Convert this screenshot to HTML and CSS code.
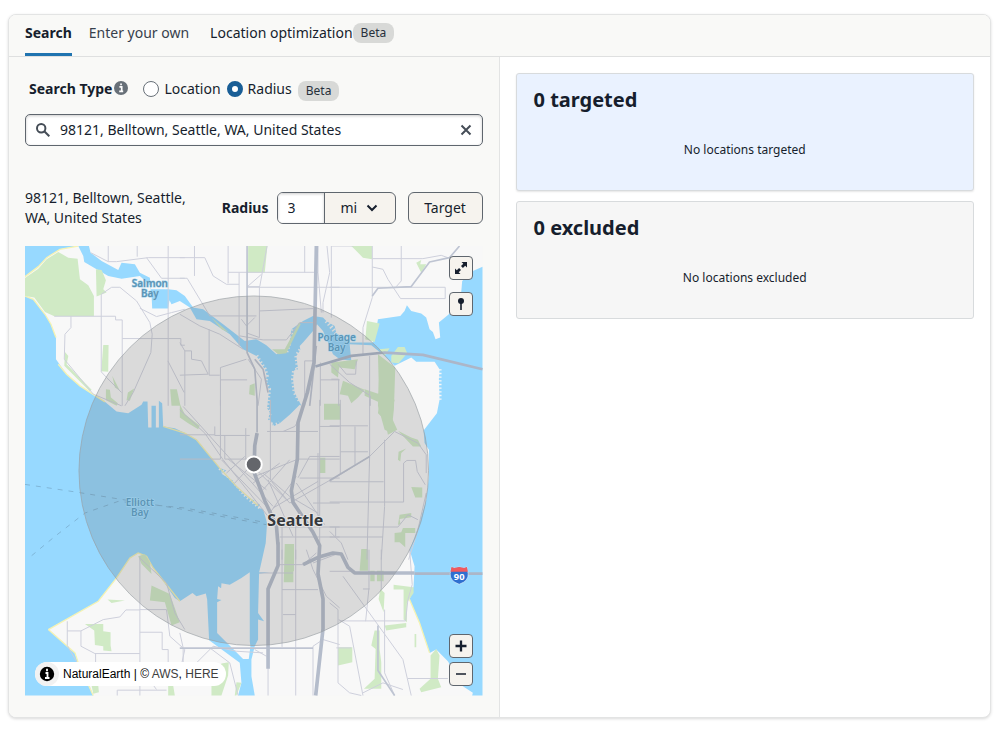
FILE: index.html
```html
<!DOCTYPE html>
<html lang="en">
<head>
<meta charset="utf-8">
<meta name="viewport" content="width=device-width, initial-scale=1">
<title>Location targeting</title>
<link rel="stylesheet" href="styles.css">
</head>
<body>
<main class="card">
  <nav class="tabs" aria-label="Targeting method">
    <button class="tab tab-active" type="button">Search</button>
    <button class="tab" type="button">Enter your own</button>
    <button class="tab tab-dark" type="button">Location optimization <span class="badge">Beta</span></button>
  </nav>
  <div class="columns">
    <section class="finder">
      <div class="types" role="radiogroup" aria-labelledby="type-title">
        <strong id="type-title">Search Type</strong>
        <svg class="info" viewBox="0 0 14 14" aria-hidden="true"><circle cx="7" cy="7" r="7" fill="#687078"/><path d="M5.4 5.8h2.3v4M5.2 10.3h4M6.2 3.3h1.7" stroke="#fff" stroke-width="1.7" fill="none"/></svg>
        <label class="choice"><input type="radio" name="type"> Location</label>
        <label class="choice"><input type="radio" name="type" checked> Radius</label>
        <span class="badge badge-low">Beta</span>
      </div>
      <div class="searchbox">
        <svg class="lens" viewBox="0 0 14 14" aria-hidden="true"><circle cx="5.2" cy="5.2" r="4.2"/><path d="M8.3 8.3l5 5"/></svg>
        <input type="text" aria-label="Search locations" value="98121, Belltown, Seattle, WA, United States">
        <button class="clear" type="button" aria-label="Clear"><svg viewBox="0 0 12 12"><path d="M1.5 1.5l9 9M10.5 1.5l-9 9"/></svg></button>
      </div>
      <div class="radius-row">
        <p class="place">98121, Belltown, Seattle, WA, United States</p>
        <label class="radius-label" for="radius">Radius</label>
        <div class="combo">
          <input id="radius" type="text" value="3">
          <div class="unit">
            <select aria-label="Unit"><option>mi</option><option>km</option></select>
            <svg viewBox="0 0 12 8" aria-hidden="true"><path d="M1.5 1.5L6 6l4.500-4.500"/></svg>
          </div>
        </div>
        <button class="target" type="button">Target</button>
      </div>
      <div class="map">
        <svg class="map-art" viewBox="0 0 1374 1350" preserveAspectRatio="xMidYMid slice" role="img" aria-label="Map of Seattle">
          <rect class="land" width="1374" height="1350"/>
          <g class="water">
            <path d="M0 0H192L197 20 230 45 280 72 290 50 330 55 345 80 375 95 378 130 430 130 455 133 480 150 505 185 535 190 595 235 660 285 695 280 725 298 755 325 785 318 795 290 800 250 835 225 865 210 895 215 905 225 930 240 935 262 975 290 1045 290 1055 250 1060 220 1127 210 1140 195 1147 178 1160 195 1190 203 1205 215 1215 250 1225 258 1233 280 1247 275 1243 230 1273 205 1310 140 1313 105 1345 75 1374 62V1350H1343L1345 1342 1315 1322 1270 1247 1235 1212 1215 1222 1185 1132 1155 1062 1167 1022 1170 962 1155 912 1160 902 1185 832 1205 762 1213 692 1213 612 1200 592 1197 554 1237 502 1245 462 1243 400 1245 370 1230 348 1175 348 1160 335 1110 360 1080 330 1040 298 975 295 980 345 945 340 925 325 910 290 895 255 877 235 865 255 835 290 825 300 827 312 815 330 820 370 808 374 805 400 810 440 830 480 825 477 795 507 765 532 745 542 740 528 730 522 735 500 727 487 733 430 722 410 726 390 720 370 695 330 655 310 615 265 555 225 515 220 495 185 465 165 440 175 434 163 430 188 382 188 380 145 375 118 345 90 290 98 250 90 215 70 178 48 175 30 160 0 105 10 65 35 40 62 0 92Z"/>
            <path d="M0 150L25 160 60 205 78 235 93 275V340L125 385 165 420 210 450 240 468 275 497 310 502 350 477 355 467H368L370 545H380V480H393V545H402V465L412 472 415 542 450 547 480 562 515 582 585 667 605 674 590 684 625 705 635 722 665 752 690 765 685 774 705 775 700 787 715 790 727 832 723 892 705 972 703 980H735L703 984 700 1102 718 1127 700 1122V1182L690 1202 680 1242V1292L690 1350H640L650 1312 645 1252 553 1184 547 1062 543 1044 515 1052 503 1042 465 1067 450 1057 405 992 385 967 365 932 340 922 315 937 275 997 220 1067 70 1152 150 1222 160 1252 190 1312 205 1350H0Z"/>
          </g>
          <path class="land" d="M675 980L650 997 615 1017 590 1013 589 1028 580 1022 577 1060 590 1063 577 1070V1162L655 1240H672L677 1202 675 1187Z"/>
          <path class="docks" d="M695 330L720 370 726 390 722 410 733 430 727 487 735 500 730 522 745 542 765 532M800 250L795 290 785 318M827 312L815 330 820 370 808 374 805 400 810 440 828 470M585 667L625 705 665 752 705 785M368 55L430 130M905 225L935 262M1245 370V462"/>
          <g class="beach"><path d="M0 92L40 62 65 35 105 10 160 0M0 150L25 160 60 205 78 235 93 275M100 355L125 385 165 420 240 468M415 542L480 562 515 582 585 667 635 722 700 780M70 1152L220 1067 275 997 315 937 340 922 365 932 385 967 465 1067M70 1152L150 1222 160 1252 205 1350M1155 1062L1185 1132 1215 1222"/></g>
          <g class="park">
            <path d="M0 96L40 68 65 40 100 18 130 35 158 38 165 100 190 118 207 150V211H88L60 198 28 155 0 150ZM213 70L230 72 243 103 235 130 245 140 215 152ZM235 297H251L250 378 229 376ZM120 318L130 330 125 355 200 432 195 437 118 360ZM243 430L255 432 258 455 279 472 275 480 243 463ZM309 440L328 428 315 465 305 463ZM436 430L456 430 467 480H440ZM262 390L285 435 270 425Z"/>
            <path d="M670 0H728L720 80H670ZM780 310L823 230 828 235 785 322 760 325 742 310ZM675 418L690 412V450L673 445ZM920 350L945 350 940 395 920 380ZM560 215L612 260 590 250Z"/>
            <path d="M980 0H1042V40L1015 35 990 10ZM1175 50L1190 42 1187 55 1205 55 1190 80ZM1027 225L1065 233 1050 288 1022 280ZM1100 330L1120 303 1140 303 1148 322 1122 352 1100 350ZM1063 310L1095 307 1080 330ZM1060 325L1112 365 1108 490 1100 562 1080 552 1060 480 1062 400ZM925 350L1000 340 990 370 945 365ZM955 405L1020 432 1000 455 980 472 970 450 945 445ZM1020 430L1065 445V470L1020 450Z"/>
            <path d="M898 474H948V522H898ZM886 636H902V682H886ZM780 895H808V975L780 1010ZM780 900H806V1010H777ZM465 475L480 505 525 540 520 550 490 532 465 515ZM1065 462H1110L1100 512 1118 552 1090 567 1080 522 1060 502ZM1120 555L1160 575 1180 582 1190 602 1165 602ZM1122 618L1145 608 1130 622 1127 647 1120 642ZM1160 724L1193 725V755H1172ZM1125 807L1160 802V815L1125 820 1128 835 1120 838ZM1110 862L1130 860 1135 847H1172V862H1142V905L1125 890H1110ZM1010 910H1028V962H1010Z"/>
            <path d="M340 932L360 925 375 950 380 985 350 955ZM380 1020L435 1045 465 1130 440 1140 420 1070 375 1065ZM180 1135H235V1157L257 1160V1200L260 1217 235 1215V1202L210 1198 208 1155ZM248 1062L300 1065 260 1072ZM200 1320L220 1320 222 1340 205 1345ZM430 1320H445L450 1350H430ZM490 1320L560 1305 590 1254 612 1250 610 1290 590 1350H560V1312ZM635 1310L650 1312 635 1350H630Z"/>
            <path d="M1010 912H1030V975H1005ZM1037 975H1050V1007H1037ZM1057 975H1077V1007H1057ZM1107 1017L1167 1025V1042L1147 1072V1130L1137 1122V1032L1107 1032ZM1067 1030L1080 1042 1077 1100 1062 1060ZM940 1205H983V1250L940 1260ZM1050 1155H1065V1210L1070 1250 1070 1330 1018 1330 1050 1300 1053 1210 1040 1200ZM1080 1140L1145 1132V1145L1085 1155ZM1218 1230L1235 1210 1245 1230 1240 1300 1250 1325 1190 1340 1185 1330 1218 1300ZM1170 1165H1175V1205H1170Z"/>
          </g>
          <g class="roads">
            <path d="M197 20L250 47H275L370 35H480M250 0V47M337 0V32M365 35L410 97H480M430 0V480M88 211H272V222H292V480M138 211V245L120 265 118 340 205 445 290 480M292 278H468V298H480M229 378V145L260 124H285L335 165 375 230 382 265 378 320 325 440 300 480M345 187L395 212 440 200 480 190M429 345L478 440M229 378L245 395 290 440"/>
            <g transform="translate(465)"><path d="M0 35H75L100 90 140 115H178M44 0V90M145 0V112M145 79H415M262 0L240 122 203 122M203 122L245 85M178 80V300M239 122V275L203 262M203 124H480M0 97H22L90 210H230M88 250V388H120M15 315V480M122 480V365L200 340M415 0V80L425 200M442 0L450 80 430 170V200M240 195L400 188M180 270L250 282H320L360 230H400M0 205L60 240 120 265 190 310M185 220L200 240 225 215M0 290L15 315H35V340L65 345 85 385 0 388M122 402H202M375 0V80M205 340L245 400 235 480M375 480V345H400M422 350V480M422 402H480"/></g>
            <g transform="translate(915)"><path d="M0 124H347V158H213L175 100 160 70 128 63M128 0V155L100 245V330M128 38H280L335 28 355 35M215 0V105L200 122M72 0H5V215M0 355L60 410 122 450 122 480M120 330V480M5 400H27V480M25 355L50 385H78L80 345"/></g>
            <g transform="translate(465 462)"><path d="M122 0V178H0M0 105H105M105 107H210M105 80V107M135 107V178H220M198 85V178M272 0V240M310 95L345 80 358 60M420 0V480M420 80H480M262 95H415M0 30L75 100 130 180 265 350M10 20L100 120 280 320M125 180L270 330M145 178L260 270M140 220L195 170M165 250L230 180M220 250L300 190M250 270L330 180M250 220L330 290 415 340M275 245L330 310 480 225M280 325L415 245M270 340L350 230M265 240L340 410M225 230L350 180M230 210L320 300M350 178H480M355 234L390 170H480M415 160V370M360 235H480M350 250L435 375M300 412H480M300 382H480M307 380V480M348 360V480M400 310H480"/></g>
            <g transform="translate(915 462)"><path d="M0 78H115M32 0V225M76 80V195M32 156H115M120 0V170L112 480M0 245L120 170 195 95 265 130 290 165V220M165 120V320L155 480M0 246H162M0 307H222V190L232 182H258L263 215 287 255M0 382H205L235 345 265 360M0 412H160M0 395L35 430 55 480M237 480L265 390 290 280M18 382V410"/></g>
            <g transform="translate(-15 912)"><path d="M360 20V438M360 180H440L450 260 495 300M360 248H427V300H445V390M142 215V288L175 345M142 244H183V290L225 312H360M183 244L250 210 300 202 318 181H360M227 312V350M292 438V422H440M395 400L410 420M360 25L440 100 465 190 495 240M495 300L475 390"/></g>
            <g transform="translate(465 912)"><path d="M0 250L10 295V340M0 295H90L150 340 175 438M90 295H400M307 0V292M348 0V438M307 120H415M310 195H348M240 70H340M225 300L260 320M265 350V438M400 290V438M400 290L430 270 480 285M300 45H370L410 10M380 0L400 60 440 140 480 175M400 40L480 10M70 345V400M45 345L100 290 170 305 250 310"/></g>
            <g transform="translate(915 912)"><path d="M0 160L25 180V400L60 430 95 438M27 210L60 230 100 438M30 214H228L235 150 248 105 240 0M40 80L220 330 245 438M155 0V120M118 0V115L108 215M165 180V370L195 438M0 65H75M20 295H65M235 387H355M100 118H120M220 420L160 400 100 430"/></g>
          </g>
          <g class="main-roads">
            <path class="bridge" d="M1170 984H1374M872 362L980 330 1080 320 1195 327 1374 370"/>
            <path class="mid" d="M667 0V320L690 370 697 462V560M915 704L1035 632M1043 150L1060 127 1160 122 1215 48 1275 35 1305 0M1060 1140V1275L1110 1350M690 340L715 370 730 440M855 480L875 300M465 1208H865"/>
            <path class="wide" d="M875 0L868 350 848 440 820 530 818 640 800 735 805 770 865 860 885 900 880 985 895 1060 895 1150 873 1350M760 890V960L730 1030V1270M697 562L690 600 688 680 720 765 755 840 760 900M835 957L880 935 925 922 950 925 970 965 990 982H1170"/>
          </g>
          <path class="ferry" d="M0 716L160 740 480 792 725 837M20 930L90 872 180 802 280 767 480 787 720 830"/>
          <circle class="range" cx="687" cy="675" r="525"/>
          <circle class="pin" cx="687" cy="656" r="24"/>
          <text class="water-label"><tspan x="375" y="123">Salmon</tspan><tspan x="375" y="153">Bay</tspan></text>
          <text class="water-label"><tspan x="936" y="286">Portage</tspan><tspan x="936" y="316">Bay</tspan></text>
          <text class="water-label"><tspan x="345" y="781">Elliott</tspan><tspan x="345" y="811">Bay</tspan></text>
          <text class="city" x="812" y="840">Seattle</text>
          <path d="M1281 964l8 3 15-3 15 3 8-3 4 20q2 22-27 32-29-10-27-32z" fill="#2f6fd0" stroke="#d5e8f8" stroke-width="2"/>
          <path d="M1281 964l8 3 15-3 15 3 8-3 3 14h-52z" fill="#f05a5f"/>
          <text class="shield" x="1304" y="1002">90</text>
        </svg>
        <div class="map-tools">
          <button type="button" aria-label="Expand map"><svg viewBox="0 0 16 16"><path d="M8.500 2H14v5.500L12.200 5.700 9.900 8 8 6.100l2.300-2.300zM2 14V8.500l1.800 1.800L6.100 8 8 9.900 5.700 12.200 7.500 14z" fill="currentColor"/></svg></button>
          <button type="button" aria-label="Drop pin"><svg viewBox="0 0 16 16"><circle cx="8" cy="5" r="3" fill="currentColor"/><path d="M8 6v8" stroke="currentColor" stroke-width="1.600"/></svg></button>
        </div>
        <div class="map-zoom">
          <button type="button" aria-label="Zoom in"><svg viewBox="0 0 16 16"><path d="M8 2.500v11M2.500 8h11" stroke="currentColor" stroke-width="2.300"/></svg></button>
          <button type="button" aria-label="Zoom out"><svg viewBox="0 0 16 16"><path d="M3 8h10" stroke="currentColor" stroke-width="1.500"/></svg></button>
        </div>
        <div class="credit">
          <svg viewBox="0 0 24 24" aria-hidden="true"><circle cx="12" cy="12" r="12" fill="#f2f2f2"/><circle cx="12" cy="12" r="7.200"/><path d="M12 6.800v2.500M10.500 11h2v5M10 16h4.500" stroke="#fff" stroke-width="1.800" fill="none"/></svg>
          <span>NaturalEarth | © <a href="#aws">AWS</a>, <a href="#here">HERE</a></span>
        </div>
      </div>
    </section>
    <section class="results">
      <article class="panel panel-targeted"><h2>0 targeted</h2><p>No locations targeted</p></article>
      <article class="panel"><h2>0 excluded</h2><p>No locations excluded</p></article>
    </section>
  </div>
</main>
</body>
</html>
```
FILE: styles.css
```css
* { box-sizing: border-box; }
body {
  margin: 0;
  padding: 14px 12px 16px 8px;
  background: #fff;
  color: #161e2d;
  font: 14px/20px "Noto Sans", "Open Sans", sans-serif;
}
button, input, select { font: inherit; color: inherit; }
button { cursor: pointer; }
h2, p { margin: 0; }
.card {
  border: 1px solid #e3e4e4;
  border-radius: 8px;
  background: #fff;
  box-shadow: 0 1px 3px rgba(0, 0, 0, .15);
  overflow: hidden;
}
.tabs {
  display: flex;
  gap: 17px;
  height: 42px;
  padding: 0 16px;
  background: #f9f9f7;
  border-bottom: 1px solid #dfe0e0;
}
.tab {
  display: flex;
  align-items: center;
  padding: 0 0 2px;
  border: 0;
  border-bottom: 3px solid transparent;
  background: none;
  color: #37404c;
  white-space: nowrap;
}
.tab-active { border-color: #2074b0; color: #161e2d; font-weight: 700; }
.tab-dark { margin-left: 4px; color: #161e2d; }
.badge {
  padding: 0 8px;
  border-radius: 8px;
  background: #d8d9d7;
  color: #27303b;
  font-size: 12px;
}
.columns { display: grid; grid-template-columns: 1fr 1fr; }
.finder {
  padding: 16px 16px 21px;
  background: #f9f9f7;
  border-right: 1px solid #e3e4e4;
}
.types { display: flex; align-items: center; height: 32px; padding-left: 4px; white-space: nowrap; }
.info { width: 14px; height: 14px; margin: 0 15px 2px 2px; }
.choice { display: flex; align-items: center; gap: 5px; margin-right: 6px; }
.choice input {
  appearance: none;
  width: 16px;
  height: 16px;
  margin: 0;
  border: 1px solid #687078;
  border-radius: 50%;
  background: #fff;
}
.choice input:checked { border: 5px solid #195e96; }
.badge-low { margin-top: 4px; }
.searchbox {
  display: flex;
  align-items: center;
  gap: 10px;
  height: 32px;
  margin: 9px 0 42px;
  padding: 0 10px;
  border: 1px solid #5f666e;
  border-radius: 5px;
  background: #fff;
  box-shadow: inset 0 1px 3px rgba(0, 0, 0, .2);
}
.searchbox input { flex: 1; min-width: 0; padding: 0; border: 0; background: none; }
.lens { width: 14px; height: 14px; fill: none; stroke: #454d57; stroke-width: 2; }
.clear { width: 12px; height: 12px; padding: 0; border: 0; background: none; }
.clear svg { display: block; stroke: #454d57; stroke-width: 2; }
.radius-row { display: flex; align-items: center; margin-bottom: 18px; }
.place { flex: 1; padding-right: 24px; }
.radius-label { margin-right: 8px; font-weight: 700; }
.combo {
  display: flex;
  width: 119px;
  height: 32px;
  border: 1px solid #5f666e;
  border-radius: 6px;
  background: #f6f3ee;
  overflow: hidden;
}
.combo input {
  width: 47px;
  padding: 0 10px;
  border: 0;
  border-right: 1px solid #5f666e;
  background: #fff;
  box-shadow: inset 0 1px 3px rgba(0, 0, 0, .2);
}
.unit { position: relative; flex: 1; }
.unit select {
  appearance: none;
  width: 100%;
  height: 100%;
  padding: 0 16px;
  border: 0;
  background: none;
}
.unit svg {
  position: absolute;
  right: 17px;
  top: 11px;
  width: 12px;
  height: 8px;
  fill: none;
  stroke: #161e2d;
  stroke-width: 2;
  pointer-events: none;
}
.target {
  width: 75px;
  height: 32px;
  margin-left: 12px;
  padding: 0;
  border: 1px solid #5f666e;
  border-radius: 6px;
  background: #f6f3ee;
}
.map { position: relative; aspect-ratio: 458 / 450; overflow: hidden; }
.map-art { display: block; width: 100%; height: 100%; }
.land { fill: #f8f8f8; }
.docks { fill: none; stroke: #f8f8f8; stroke-width: 12; stroke-dasharray: 4 7; }
.water { fill: #97d9ff; }
.beach { fill: none; stroke: #f5f3b4; stroke-width: 4; }
.park { fill: #d0eac5; }
.roads { fill: none; stroke: #ced0dc; stroke-width: 3; }
.main-roads { fill: none; stroke-linejoin: round; }
.wide { stroke: #b4bccb; stroke-width: 11; }
.bridge { stroke: #acb6c8; stroke-width: 8; }
.mid { stroke: #bec4d2; stroke-width: 5; }
.ferry { fill: none; stroke: #7fb6d8; stroke-width: 3; stroke-dasharray: 15 18; }
.range { fill: rgba(100, 100, 100, .2); stroke: #9aa0a4; stroke-width: 2; }
.pin { fill: #64666b; stroke: #fff; stroke-width: 6; }
.water-label {
  fill: #5b94b5;
  font-size: 30px;
  font-weight: 600;
  text-anchor: middle;
  paint-order: stroke;
  stroke: #a3d2ec;
  stroke-width: 3;
}
.city {
  fill: #35383c;
  font-size: 48px;
  font-weight: 700;
  text-anchor: middle;
  paint-order: stroke;
  stroke: #e6e6e6;
  stroke-width: 6;
}
.shield { fill: #fff; font-size: 28px; font-weight: 700; text-anchor: middle; }
.map-tools, .map-zoom { position: absolute; right: 10px; display: grid; }
.map-tools { top: 10px; gap: 12px; }
.map-zoom { bottom: 10px; gap: 4px; }
.map button {
  width: 24px;
  height: 24px;
  padding: 3px;
  border: 1px solid #5f666e;
  border-radius: 4px;
  background: #f6f3ee;
}
.map button svg { display: block; width: 16px; height: 16px; }
.credit {
  position: absolute;
  left: 10px;
  bottom: 10px;
  display: flex;
  align-items: center;
  gap: 4px;
  height: 24px;
  padding-right: 7px;
  border-radius: 12px;
  background: #fff;
  color: #000;
  font: 12px/20px "Liberation Sans", sans-serif;
}
.credit svg { width: 24px; height: 24px; }
.credit a { color: #404040; text-decoration: none; }
.results { display: flex; flex-direction: column; gap: 10px; padding: 16px; }
.panel {
  min-height: 118px;
  padding: 14px 17px;
  border: 1px solid #d8dbdd;
  border-radius: 3px;
  background: #f6f6f6;
}
.panel-targeted { background: #eaf2ff; box-shadow: 0 1px 2px rgba(0, 0, 0, .1); }
.panel h2 { font-size: 20px; line-height: 24px; }
.panel p { margin-top: 28px; font-size: 12px; line-height: 20px; text-align: center; }
```
